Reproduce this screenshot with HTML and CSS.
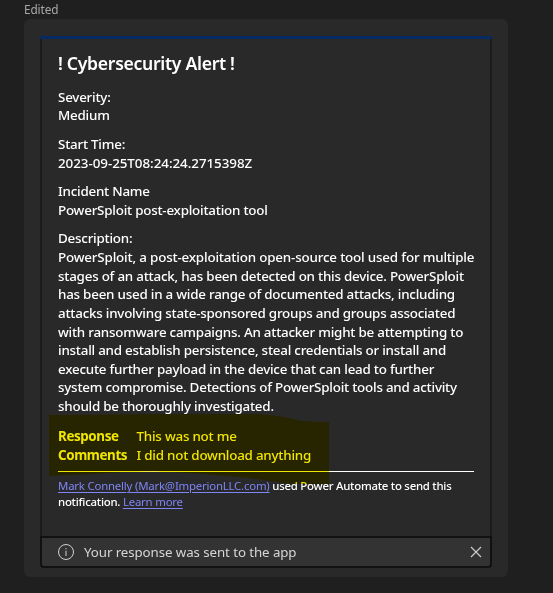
FILE: index.html
```html
<!DOCTYPE html>
<html lang="en">
<head>
<meta charset="utf-8">
<title>Cybersecurity Alert</title>
<link rel="stylesheet" href="styles.css">
</head>
<body>
<div class="edited">Edited</div>
<main class="message">
  <article class="card">
    <div class="content">
      <h1>! Cybersecurity Alert !</h1>
      <p>Severity:<br>Medium</p>
      <p>Start Time:<br><span class="time">2023-09-25T08:24:24.2715398Z</span></p>
      <p>Incident Name<br>PowerSploit post-exploitation tool</p>
      <p>Description:<br><span class="lead">PowerSploit, a post-exploitation open-source tool used for multiple</span><br>stages of an attack, has been detected on this device. PowerSploit<br>has been used in a wide range of documented attacks, including<br>attacks involving state-sponsored groups and groups associated<br>with ransomware campaigns. An attacker might be attempting to<br>install and establish persistence, steal credentials or install and<br>execute further payload in the device that can lead to further<br>system compromise. Detections of PowerSploit tools and activity<br>should be thoroughly investigated.</p>
      <dl class="facts">
        <dt>Response</dt><dd>This was not me</dd>
        <dt>Comments</dt><dd>I did not download anything</dd>
      </dl>
      <footer class="source"><a>Mark Connelly (Mark@ImperionLLC.com)</a> used Power Automate to send this<br>notification. <a>Learn more</a></footer>
      <svg class="marker" width="280" height="70" viewBox="0 0 280 70"><path d="M0 1 C70 1 130 -1 179 -1 C210 0 230 1 244 5 Q252 8 280 8 V70 H241 C213 65 190 63 165 61 C120 57 85 57 45 60 L0 62Z"/></svg>
    </div>
    <div class="status">
      <svg width="16" height="16" viewBox="0 0 16 16"><circle cx="8" cy="8" r="7.5"/><path d="M8 6.7V12M8 4V5.3"/></svg>
      <span>Your response was sent to the app</span>
      <svg class="close" width="12" height="12" viewBox="0 0 12 12"><path d="M1 1 11 11M11 1 1 11"/></svg>
    </div>
  </article>
</main>
</body>
</html>
```
FILE: styles.css
```css
* { box-sizing: border-box; }
body {
  margin: 0;
  height: 593px;
  overflow: hidden;
  padding-left: 24px;
  background: #1f1f1f;
  color: #fff;
  font-family: "Noto Sans", sans-serif;
}
.edited {
  height: 19px;
  font-size: 11.8px;
  line-height: 19px;
  letter-spacing: -0.1px;
  color: #a8a8a8;
}
.message {
  width: 484px;
  height: 558px;
  padding: 17px 16px 9px;
  border-radius: 6px;
  background: #292929;
}
.card {
  display: flex;
  flex-direction: column;
  width: 452px;
  height: 532px;
  border-top: 3px solid #052a64;
}
.content {
  position: relative;
  flex: 1;
  padding: 12px 16px 0;
  border: solid #1b1b1b;
  border-width: 0 2px;
  font-size: 13.4px;
  font-weight: 500;
  line-height: 18.62px;
  letter-spacing: -0.23px;
  white-space: nowrap;
}
h1 {
  margin: 0 0 11.7px;
  font-size: 17.6px;
  line-height: 25px;
  font-weight: 600;
  letter-spacing: -0.3px;
}
p { margin: 0 0 10px; }
.time { letter-spacing: -0.05px; }
.lead { letter-spacing: -0.18px; }
.facts {
  display: grid;
  grid-template-columns: 78.5px 1fr;
  margin: 0;
  padding: 1.2px 0 7.1px;
  border-bottom: 1px solid #fff;
}
dt { font-weight: 700; letter-spacing: -0.4px; }
dd { margin: 0; }
.source {
  margin-top: 6px;
  font-size: 11.4px;
  line-height: 16px;
  letter-spacing: -0.25px;
}
a { color: #7f85f5; font-weight: 400; letter-spacing: -0.2px; text-decoration: underline; text-underline-offset: 2px; }
.marker {
  position: absolute;
  left: 7px;
  top: 375px;
  fill: #f1e600;
  mix-blend-mode: multiply;
}
.status {
  display: flex;
  align-items: center;
  height: 32px;
  padding: 0 8px 0 16px;
  border: 2px solid #111;
  border-radius: 0 0 4px 4px;
  background: #333;
  color: #d6d6d6;
  font-size: 13.3px;
  letter-spacing: -0.08px;
}
.status span { margin-left: 10px; }
.status svg { fill: none; stroke: #d0d0d0; stroke-width: 1; }
.status .close { margin-left: auto; stroke-width: 1.1; }
```
